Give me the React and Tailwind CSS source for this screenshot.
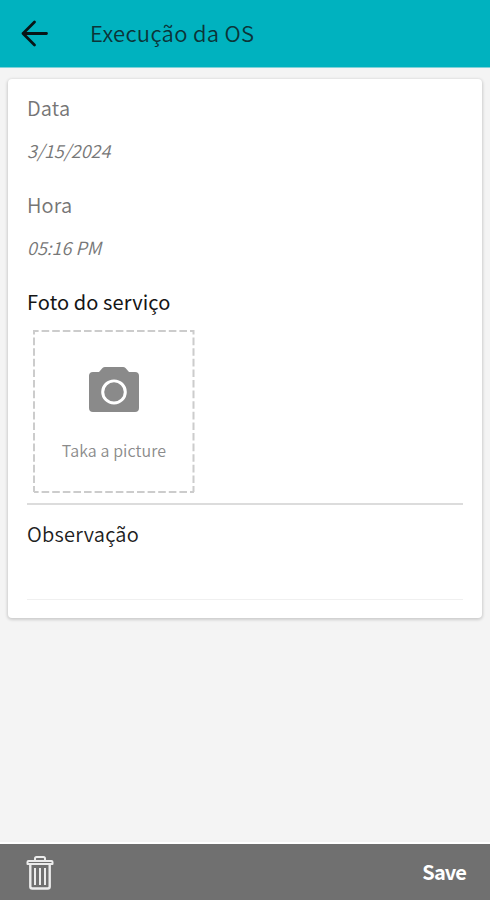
function Header() {
  return (
    <header className="flex h-[68px] shrink-0 items-center border-b border-[#7fd2d9] bg-[#00b2bf] pl-[21px]">
      <svg width="28" height="28" viewBox="0 0 28 28" fill="none" stroke="#081517" strokeWidth="2.800" strokeLinecap="round" strokeLinejoin="round">
        <path d="M13.500 2 2 13.500l11.500 11.500M2 13.500h23.500" />
      </svg>
      <h1 className="ml-[41px] pb-[4px] text-[22px] leading-[32px] font-[350] tracking-[0.3px] whitespace-nowrap text-[#0c3438]">Execução da OS</h1>
    </header>
  );
}

function ReadOnlyField({ label, value }) {
  return (
    <div className="h-[97px]">
      <div className="text-[20px] leading-[30px] font-[350] tracking-[0.15px] text-[#757575]">{label}</div>
      <div className="mt-[12px] text-[18px] leading-[30px] font-[350] text-[#777777] italic">{value}</div>
    </div>
  );
}

function PhotoBox() {
  return (
    <button className="relative ml-[6px] flex h-[163px] w-[162px] flex-col items-center pt-[37px]">
      <svg className="absolute inset-0" width="162" height="163" fill="none" stroke="#cccccc" strokeWidth="2">
        <path d="M1 1h160M1 162h160M1 0v162M160.500 0v162" strokeDasharray="7.600 3" strokeDashoffset="3" />
      </svg>
      <svg width="52" height="46" viewBox="0 0 52 47" preserveAspectRatio="none">
        <path d="M17 0h18q1.500 0 2.500 1l3.500 4h6q4 0 4 4v33q0 4-4 4H5q-4 0-4-4V9q0-4 4-4h6l3.500-4q1-1 2.500-1z" fill="#8a8a8a" />
        <circle cx="26" cy="25.500" r="11.300" fill="none" stroke="#fff" strokeWidth="3" />
      </svg>
      <span className="mt-[24px] text-[16px] leading-[26px] font-[350] tracking-[0.1px] whitespace-nowrap text-[#8b8b8b]">Taka a picture</span>
    </button>
  );
}

function TrashIcon() {
  return (
    <svg width="28" height="35" viewBox="0 0 28 35" fill="none" stroke="#ececec" strokeWidth="2" strokeLinejoin="round">
      <path d="M9 5V3.500Q9 2 10.500 2h7Q19 2 19 3.500V5" />
      <path d="M2.500 6h23q1 0 1 1v2h-25V7q0-1 1-1z" />
      <path d="M4.300 9.500v22q0 2 2 2h15.400q2 0 2-2v-22" strokeWidth="2.400" />
      <path d="M9 13v17M14 13v17M19 13v17" />
    </svg>
  );
}

export default function App() {
  return (
    <div className="flex h-[900px] w-[490px] flex-col overflow-hidden bg-[#f4f4f4] font-['Noto_Sans_CJK_SC','Noto_Sans',sans-serif]">
      <Header />
      <main className="flex-1 px-[8px] pt-[11px]">
        <section className="h-[539px] rounded-[4px] bg-white px-[19px] pt-[14px] shadow-[0_1px_3px_1px_rgba(0,0,0,0.16)]">
          <ReadOnlyField label="Data" value="3/15/2024" />
          <ReadOnlyField label="Hora" value="05:16 PM" />
          <div className="text-[20px] leading-[30px] tracking-[0.1px] text-[#151515]">Foto do serviço</div>
          <div className="h-[188px] border-b-2 border-[#dcdcdc] pt-[13px]">
            <PhotoBox />
          </div>
          <div className="h-[95px] border-b border-[#f0f0f0] pt-[14px] text-[20px] leading-[30px] font-[350] tracking-[0.25px] text-[#202020]">Observação</div>
        </section>
      </main>
      <footer className="flex h-[58px] shrink-0 items-center justify-between border-t-2 border-white bg-[#707070] pr-[24px] pl-[26px]">
        <TrashIcon />
        <span className="text-[20px] leading-[30px] font-bold tracking-[-0.9px] text-white">Save</span>
      </footer>
    </div>
  );
}
